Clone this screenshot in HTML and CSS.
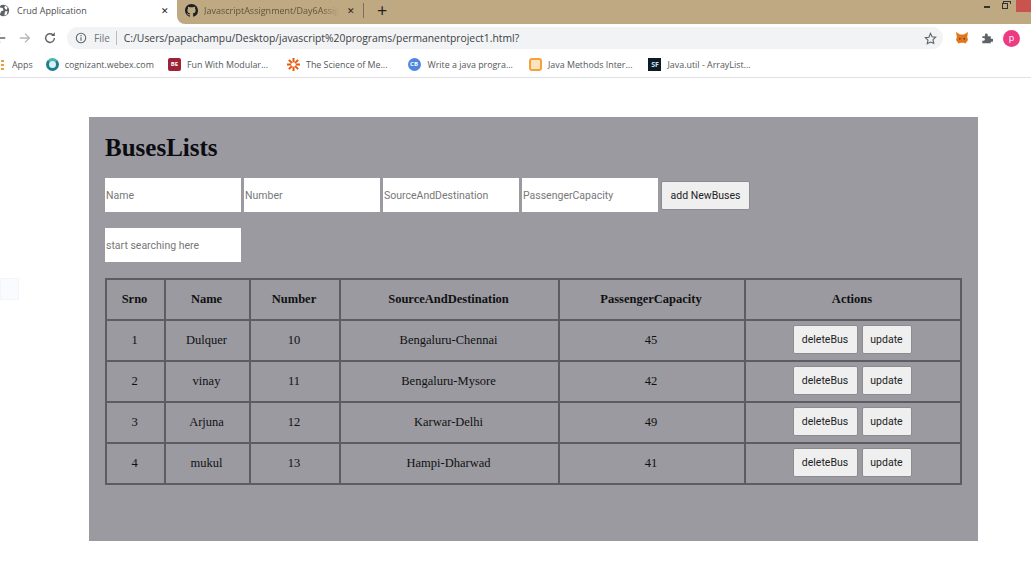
FILE: index.html
```html
<!DOCTYPE html>
<html lang="en">

<head>
    <meta charset="UTF-8">
    <title>Crud Application</title>
    <link rel="stylesheet" href="styles.css">
</head>

<body>

    <header class="browser">
        <div class="tabstrip">
            <div class="tab tab-active">
                <svg class="tab-icon" viewBox="0 0 16 16"><circle cx="8" cy="8" r="7" fill="#5f6368"/><path d="M3 4l4 1 1 3-3 1-1 3-2-3zM10 2l3 2-1 3-2-1-1-2zM10 9l3 0-1 4-3 1z" fill="#fff"/></svg>
                <span class="tab-title">Crud Application</span>
                <span class="tab-close">✕</span>
            </div>
            <div class="tab-rest">
                <div class="tab tab-other">
                    <svg class="tab-icon" viewBox="0 0 16 16"><path fill="#1b1f23" d="M8 0C3.58 0 0 3.58 0 8c0 3.54 2.29 6.53 5.47 7.59.4.07.55-.17.55-.38 0-.19-.01-.82-.01-1.49-2.01.37-2.53-.49-2.69-.94-.09-.23-.48-.94-.82-1.13-.28-.15-.68-.52-.01-.53.63-.01 1.08.58 1.23.82.72 1.21 1.87.87 2.33.66.07-.52.28-.87.51-1.07-1.78-.2-3.64-.89-3.64-3.95 0-.87.31-1.59.82-2.15-.08-.2-.36-1.02.08-2.12 0 0 .67-.21 2.2.82.64-.18 1.32-.27 2-.27s1.36.09 2 .27c1.53-1.04 2.2-.82 2.2-.82.44 1.1.16 1.92.08 2.12.51.56.82 1.27.82 2.15 0 3.07-1.87 3.75-3.65 3.95.29.25.54.73.54 1.48 0 1.07-.01 1.93-.01 2.2 0 .21.15.46.55.38A8.01 8.01 0 0 0 16 8c0-4.42-3.58-8-8-8z"/></svg>
                    <span class="tab-title tab-title-cut">JavascriptAssignment/Day6Assig</span>
                    <span class="tab-close">✕</span>
                </div>
                <span class="tab-plus">+</span>
                <div class="window-btns">
                    <span class="win-min"></span>
                    <span class="win-max"></span>
                    <span class="win-close"></span>
                </div>
            </div>
        </div>

        <div class="toolbar">
            <svg class="nav-icon nav-back" viewBox="0 0 16 16"><path d="M14 8H3M8 3L3 8l5 5" fill="none" stroke="#5f6368" stroke-width="1.6"/></svg>
            <svg class="nav-icon" viewBox="0 0 16 16"><path d="M2 8h11M8 3l5 5-5 5" fill="none" stroke="#b4b7bb" stroke-width="1.6"/></svg>
            <svg class="nav-icon" viewBox="0 0 16 16"><path d="M13 8a5 5 0 1 1-1.500-3.500" fill="none" stroke="#5f6368" stroke-width="1.600"/><path d="M13.500 1.500v4.200H9.300z" fill="#5f6368"/></svg>
            <div class="omnibox">
                <svg class="info-icon" viewBox="0 0 14 14"><circle cx="7" cy="7" r="5.500" fill="none" stroke="#5f6368" stroke-width="1.200"/><path d="M7 6v4.200M7 3.600v1.300" stroke="#5f6368" stroke-width="1.300"/></svg>
                <span class="scheme">File</span>
                <span class="url">C:/Users/papachampu/Desktop/javascript%20programs/permanentproject1.html?</span>
                <svg class="star-icon" viewBox="0 0 14 14"><path d="M7 1.500l1.700 3.600 3.900.5-2.900 2.700.8 3.900L7 10.800l-3.500 1.900.8-3.900-2.900-2.700 3.900-.5z" fill="none" stroke="#5f6368" stroke-width="1.200"/></svg>
            </div>
            <svg class="ext-fox" viewBox="0 0 14 14"><path d="M1 1l4 2.500h4L13 1l-.8 5 .8 3-2.500 3.500-2-.7H5.500l-2 .7L1 9l.8-3z" fill="#e2761b"/><path d="M4 7l2 .8-1.500 1zM10 7l-2 .8 1.500 1z" fill="#3a2a1c"/></svg>
            <svg class="ext-puzzle" viewBox="0 0 14 14"><path d="M1.500 5h3V3.500a1.700 1.700 0 0 1 3.400 0V5h3.500v3H13a1.700 1.700 0 0 1 0 3.400h-1.600V13H1.500v-2.800H3a1.600 1.600 0 0 0 0-3.200H1.500z" fill="#5f6368"/></svg>
            <span class="avatar">p</span>
        </div>

        <div class="bookmarks">
            <span class="apps-dots"></span>
            <span class="bm bm-apps">Apps</span>
            <span class="bm bm-webex"><i class="ico ico-webex"></i>cognizant.webex.com</span>
            <span class="bm bm-modular"><i class="ico ico-be">BE</i>Fun With Modular...</span>
            <span class="bm bm-science"><svg class="ico" viewBox="0 0 14 14"><path d="M7 0v14M0 7h14M2 2l10 10M12 2L2 12" stroke="#e8590c" stroke-width="2.200"/><circle cx="7" cy="7" r="2.500" fill="#fff"/></svg>The Science of Me...</span>
            <span class="bm bm-java"><i class="ico ico-cb">CB</i>Write a java progra...</span>
            <span class="bm bm-methods"><i class="ico ico-methods"></i>Java Methods Inter...</span>
            <span class="bm bm-util"><i class="ico ico-sf">SF</i>Java.util - ArrayList...</span>
        </div>
    </header>

    <div class="side-box"></div>

    <div class="container">
        <h1>BusesLists</h1>

        <form class="bus-form">
            <input type="text" placeholder="Name">
            <input type="text" placeholder="Number">
            <input type="text" placeholder="SourceAndDestination">
            <input type="text" placeholder="PassengerCapacity">
            <button type="button" class="add-btn">add NewBuses</button>
        </form>

        <input class="search" type="text" placeholder="start searching here">

        <table>
            <thead>
                <tr>
                    <th class="col-srno">Srno</th>
                    <th class="col-name">Name</th>
                    <th class="col-number">Number</th>
                    <th class="col-route">SourceAndDestination</th>
                    <th class="col-capacity">PassengerCapacity</th>
                    <th>Actions</th>
                </tr>
            </thead>
            <tbody>
                <tr>
                    <td>1</td>
                    <td>Dulquer</td>
                    <td>10</td>
                    <td>Bengaluru-Chennai</td>
                    <td>45</td>
                    <td class="actions"><button type="button">deleteBus</button><button type="button">update</button></td>
                </tr>
                <tr>
                    <td>2</td>
                    <td>vinay</td>
                    <td>11</td>
                    <td>Bengaluru-Mysore</td>
                    <td>42</td>
                    <td class="actions"><button type="button">deleteBus</button><button type="button">update</button></td>
                </tr>
                <tr>
                    <td>3</td>
                    <td>Arjuna</td>
                    <td>12</td>
                    <td>Karwar-Delhi</td>
                    <td>49</td>
                    <td class="actions"><button type="button">deleteBus</button><button type="button">update</button></td>
                </tr>
                <tr>
                    <td>4</td>
                    <td>mukul</td>
                    <td>13</td>
                    <td>Hampi-Dharwad</td>
                    <td>41</td>
                    <td class="actions"><button type="button">deleteBus</button><button type="button">update</button></td>
                </tr>
            </tbody>
        </table>
    </div>

</body>

</html>
```

FILE: styles.css
```css
:root {
    --chrome-sans: "Open Sans", "Liberation Sans", sans-serif;
    --tab-bg: #bfa982;
    --panel-bg: #9a9aa0;
    --line: #5c5c62;
}

* {
    margin: 0;
    padding: 0;
    box-sizing: border-box;
}

body {
    background-color: white;
    font-family: "Liberation Serif", serif;
    overflow: hidden;
}

/* browser chrome */
.browser {
    height: 78px;
    border-bottom: 1px solid #dfe1e5;
    font-family: var(--chrome-sans);
    color: #5f6368;
}

.tabstrip {
    display: flex;
    height: 24px;
}

.tab {
    display: flex;
    align-items: center;
}

.tab-active {
    width: 177px;
    height: 20px;
    flex-shrink: 0;
}

.tab-rest {
    display: flex;
    align-items: flex-start;
    flex: 1;
    padding-top: 3px;
    background-color: var(--tab-bg);
    border-bottom-left-radius: 8px;
}

.tab-other {
    width: 187px;
    height: 15px;
    padding-left: 8px;
    border-right: 1px solid #7d6f55;
}

.tab-icon {
    width: 13px;
    height: 13px;
    flex-shrink: 0;
}

.tab-active .tab-icon {
    margin-left: -3px;
}

.tab-title {
    font-size: 9px;
    margin-left: 7px;
    flex: 1;
    white-space: nowrap;
}

.tab-active .tab-title {
    color: #4a4d51;
}

.tab-title-cut {
    flex: none;
    width: 135px;
    margin-left: 6px;
    color: #5f5540;
    -webkit-mask-image: linear-gradient(to right, black 88%, transparent);
    mask-image: linear-gradient(to right, black 88%, transparent);
}

.tab-close {
    font-size: 9px;
    color: #222;
    margin: 0 8px;
}

.tab-plus {
    font-size: 18px;
    line-height: 15px;
    color: #222;
    margin-left: 13px;
}

.window-btns {
    display: flex;
    align-items: flex-start;
    margin: -3px 0 0 auto;
}

.win-min {
    width: 6px;
    height: 2px;
    margin-top: 6px;
    background-color: #333;
}

.win-max {
    position: relative;
    width: 6px;
    height: 6px;
    margin: 3px 0 0 12px;
    border: 1px solid #333;
}

.win-max::before {
    content: "";
    position: absolute;
    left: 0;
    top: -3px;
    width: 6px;
    height: 2px;
    border: 1px solid #333;
    border-bottom: none;
}

.win-close {
    width: 15px;
    height: 12px;
    margin-left: 8px;
    background-color: #c8534f;
}

.toolbar {
    display: flex;
    align-items: center;
    height: 28px;
}

.nav-icon {
    width: 14px;
    height: 14px;
    margin-right: 11px;
}

.nav-back {
    margin-left: -7px;
}

.omnibox {
    display: flex;
    align-items: center;
    width: 876px;
    height: 22px;
    margin-left: -1px;
    padding: 0 8px;
    background-color: #f1f3f4;
    border-radius: 11px;
}

.info-icon {
    width: 12px;
    height: 12px;
}

.scheme {
    font-size: 10px;
    margin-left: 7px;
    padding-right: 6px;
    border-right: 1px solid #b8bbbf;
    color: #70757a;
}

.url {
    font-size: 10.35px;
    color: #3c4043;
    margin-left: 7px;
}

.star-icon {
    width: 13px;
    height: 13px;
    margin-left: auto;
    margin-right: -2px;
}

.ext-fox {
    width: 14px;
    height: 14px;
    margin-left: 12px;
}

.ext-puzzle {
    width: 12px;
    height: 12px;
    margin-left: 12px;
}

.avatar {
    width: 17px;
    height: 17px;
    margin-left: 10px;
    border-radius: 50%;
    background-color: #ec3b83;
    color: white;
    font-size: 9px;
    line-height: 16px;
    text-align: center;
}

.bookmarks {
    display: flex;
    align-items: center;
    height: 25px;
    font-size: 8.9px;
    color: #54585c;
    white-space: nowrap;
}

.apps-dots {
    width: 3px;
    height: 10px;
    margin-left: 1px;
    background: repeating-linear-gradient(#e9a23b 0 2px, white 2px 4px);
}

.bm {
    display: flex;
    align-items: center;
}

.bm-apps {
    margin-left: 8px;
}

.bm-webex {
    margin-left: 13px;
}

.bm-modular {
    margin-left: 14px;
}

.bm-science {
    margin-left: 19px;
}

.bm-java {
    margin-left: 20px;
}

.bm-methods {
    margin-left: 16px;
}

.bm-util {
    margin-left: 16px;
}

.ico {
    display: inline-block;
    width: 13px;
    height: 13px;
    margin-right: 6px;
    font-style: normal;
    font-size: 6px;
    font-weight: bold;
    line-height: 13px;
    text-align: center;
    color: white;
    flex-shrink: 0;
}

.ico-webex {
    border-radius: 50%;
    border: 3px solid #1d7f8c;
    border-top-color: #4fb3a8;
    background-color: #d5f2f5;
}

.ico-be {
    background-color: #9c2238;
    border-radius: 2px;
}

.ico-cb {
    background-color: #4f86e0;
    border-radius: 50%;
    margin-right: 7px;
}

.ico-methods {
    border: 2px solid #f2a33a;
    border-radius: 3px;
    background-color: #fce3bd;
}

.ico-sf {
    background-color: #0d1b26;
    color: #cfe3ee;
    font-size: 7px;
}

.side-box {
    position: absolute;
    left: 0;
    top: 278px;
    width: 19px;
    height: 22px;
    background-color: #fafbfe;
    border: 1px solid #f4f5f8;
}

/* page content */
.container {
    width: 889px;
    height: 424px;
    margin: 39px 0 0 89px;
    padding: 17px 16px 16px;
    background-color: var(--panel-bg);
}

h1 {
    font-size: 25px;
    line-height: 28px;
    color: #0b0b10;
}

.bus-form {
    display: flex;
    align-items: center;
    gap: 3px;
    margin-top: 16px;
}

input {
    width: 136px;
    height: 34px;
    padding: 1px;
    border: none;
    background-color: white;
    font-family: "Roboto", "Liberation Sans", sans-serif;
    font-size: 10.5px;
}

input::placeholder {
    color: #77777a;
}

.search {
    display: block;
    margin-top: 16px;
}

button {
    height: 29px;
    border: 1px solid #8b8b90;
    border-radius: 2px;
    background-color: #efeff0;
    color: #222;
    font-family: "Roboto", "Liberation Sans", sans-serif;
    font-size: 10.5px;
}

.add-btn {
    width: 89px;
}

table {
    width: 857px;
    margin-top: 16px;
    border-collapse: collapse;
    table-layout: fixed;
    font-size: 12.5px;
    color: #111;
}

th,
td {
    height: 41px;
    padding-right: 2px;
    border: 2px solid var(--line);
    text-align: center;
    vertical-align: middle;
}

.col-srno {
    width: 59px;
}

.col-name {
    width: 85px;
}

.col-number {
    width: 90px;
}

.col-route {
    width: 219px;
}

.col-capacity {
    width: 186px;
}

.actions {
    font-size: 0;
}

.actions button {
    width: 65px;
    margin: 0 2px 2px;
    vertical-align: middle;
}

.actions button + button {
    width: 50px;
}
```
